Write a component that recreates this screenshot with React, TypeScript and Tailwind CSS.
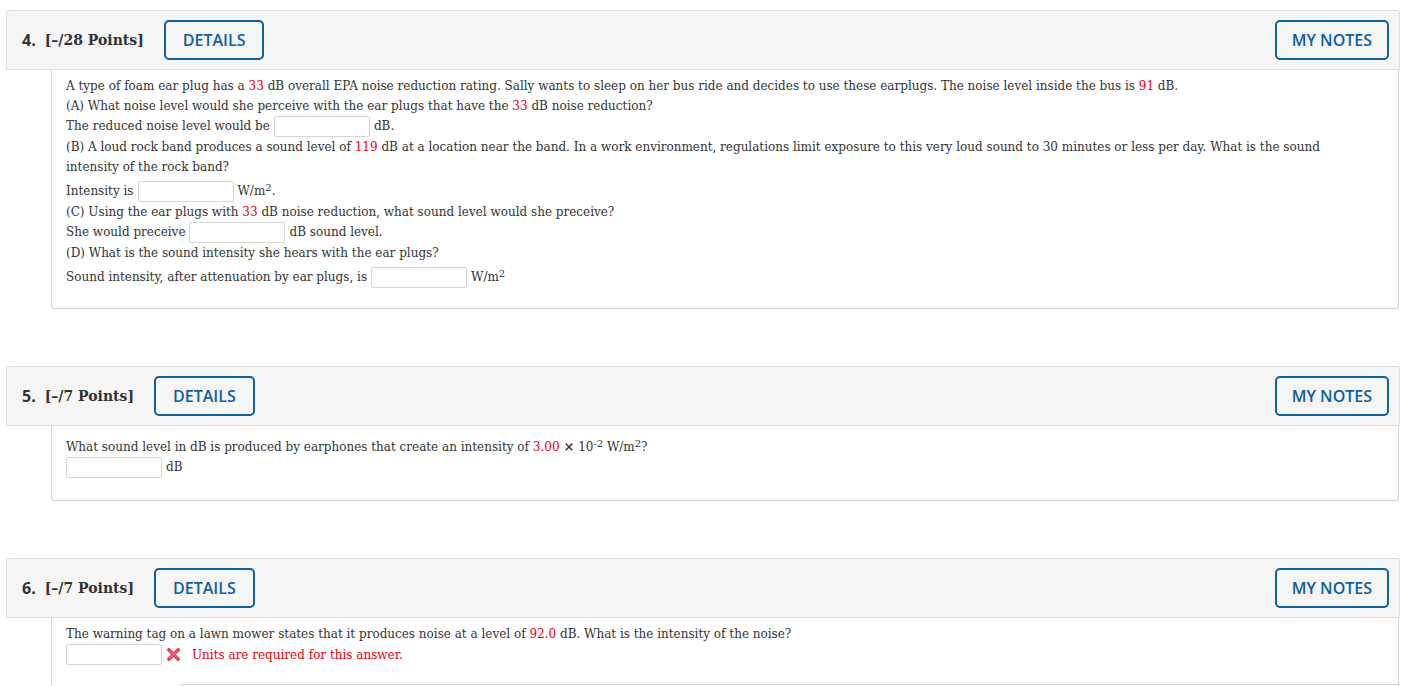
import React from 'react';

const serif = "font-['DejaVu_Serif',serif]";

const Red = ({ children }: { children: React.ReactNode }) => (
  <span className="text-[#e8000b]">{children}</span>
);

const Sup = ({ children }: { children: React.ReactNode }) => (
  <sup className="text-[10px] -top-[0.45em]">{children}</sup>
);

const Blank = ({ first }: { first?: boolean }) => (
  <span
    className={`inline-block w-[96px] h-[21px] border border-[#d6d6d6] rounded-[2px] bg-white align-middle ${
      first ? 'mr-[4px]' : 'mx-[4px]'
    }`}
  />
);

interface QuestionProps {
  num: number;
  points: number;
  children: React.ReactNode;
}

const Question: React.FC<QuestionProps> = ({ num, points, children }) => {
  return (
    <section className="mb-[57px]">
      <header className="flex items-center h-[60px] bg-[#f5f5f5] border border-[#dedede] rounded-t-[3px] pl-[15px] pr-[10px]">
        <span className="font-['Open_Sans',sans-serif] font-bold text-[16px] text-[#333]">{num}.</span>
        <span className={`${serif} ml-[9px] font-bold text-[14px] text-[#333]`}>
          [–/{points} Points]
        </span>
        <button className="ml-5 h-[40px] px-[17px] border-2 border-[#10609e] rounded-[5px] text-[#10609e] font-['Open_Sans',sans-serif] font-semibold text-[16px]">
          DETAILS
        </button>
        <button className="ml-auto h-[40px] px-[15px] border-2 border-[#10609e] rounded-[5px] text-[#10609e] font-['Open_Sans',sans-serif] font-semibold text-[16px]">
          MY NOTES
        </button>
      </header>
      <div
        className={`${serif} ml-[45px] mr-[1px] border border-t-0 border-[#d4d4d4] rounded-b-[3px] bg-white px-[14px] pt-[6px] pb-[20px] text-[12px] leading-[20px] text-[#333]`}
      >
        {children}
      </div>
    </section>
  );
};

export default function App() {
  return (
    <div className="min-h-screen bg-white pt-[10px] pl-[6px] pr-[3px]">
      <Question num={4} points={28}>
        <div>
          A type of foam ear plug has a <Red>33</Red> dB overall EPA noise reduction rating. Sally wants to sleep on
          her bus ride and decides to use these earplugs. The noise level inside the bus is <Red>91</Red> dB.
        </div>
        <div>
          (A) What noise level would she perceive with the ear plugs that have the <Red>33</Red> dB noise reduction?
        </div>
        <div>
          The reduced noise level would be
          <Blank />
          dB.
        </div>
        <div className="pr-[50px]">
          (B) A loud rock band produces a sound level of <Red>119</Red> dB at a location near the band. In a work
          environment, regulations limit exposure to this very loud sound to 30 minutes or less per day. What is the
          sound intensity of the rock band?
        </div>
        <div className="pt-[4px]">
          Intensity is
          <Blank />
          W/m<Sup>2</Sup>.
        </div>
        <div>
          (C) Using the ear plugs with <Red>33</Red> dB noise reduction, what sound level would she preceive?
        </div>
        <div>
          She would preceive
          <Blank />
          dB sound level.
        </div>
        <div>(D) What is the sound intensity she hears with the ear plugs?</div>
        <div className="pt-[4px]">
          Sound intensity, after attenuation by ear plugs, is
          <Blank />
          W/m<Sup>2</Sup>
        </div>
      </Question>

      <Question num={5} points={7}>
        <div className="pt-[5px]">
          What sound level in dB is produced by earphones that create an intensity of <Red>3.00</Red>{' '}
          <span className="font-bold text-[13px]">×</span> 10<Sup>-2</Sup> W/m<Sup>2</Sup>?
        </div>
        <div className="pb-[2px]">
          <Blank first />
          dB
        </div>
      </Question>

      <Question num={6} points={7}>
        <div>
          The warning tag on a lawn mower states that it produces noise at a level of <Red>92.0</Red> dB. What is the
          intensity of the noise?
        </div>
        <div className="flex items-center">
          <Blank first />
          <svg width="15" height="15" viewBox="0 0 16 16" className="mr-[11px]">
            <path d="M3 3 L13 13 M13 3 L3 13" stroke="#ea3448" strokeWidth="3.6" strokeLinecap="round" />
            <path d="M4 4 L12 12 M12 4 L4 12" stroke="#f26a78" strokeWidth="1.2" strokeLinecap="round" />
          </svg>
          <span className="text-[#e8000b]">Units are required for this answer.</span>
        </div>
        <div className="h-[19px]" />
        <div className="ml-[114px] -mr-[14px] border-t border-[#d4d4d4]" />
      </Question>
    </div>
  );
}
